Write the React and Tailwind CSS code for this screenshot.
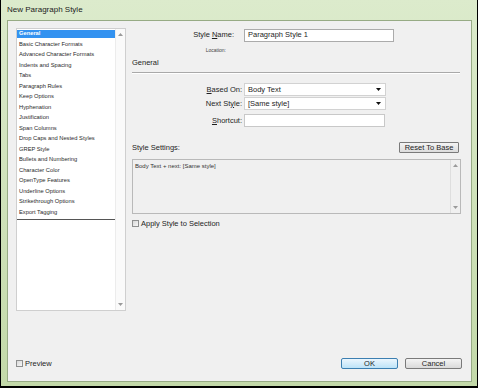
import React from 'react';

const items = [
  'General',
  'Basic Character Formats',
  'Advanced Character Formats',
  'Indents and Spacing',
  'Tabs',
  'Paragraph Rules',
  'Keep Options',
  'Hyphenation',
  'Justification',
  'Span Columns',
  'Drop Caps and Nested Styles',
  'GREP Style',
  'Bullets and Numbering',
  'Character Color',
  'OpenType Features',
  'Underline Options',
  'Strikethrough Options',
  'Export Tagging',
];

const ScrollArrow = ({ up }) => (
  <svg width="5" height="3" viewBox="0 0 5 3">
    <path d={up ? 'M0 3h5L2.5 0z' : 'M0 0h5L2.5 3z'} fill="#9a9a9a" />
  </svg>
);

const Checkbox = ({ label }) => (
  <div className="flex items-center gap-[2px]">
    <div className="w-[7px] h-[7px] border border-[#8e8f8f] bg-linear-to-br from-[#d8d8d8] to-[#f7f7f7]" />
    <span className="text-[7.5px] leading-none text-[#1e1e1e]">{label}</span>
  </div>
);

const Select = ({ value }) => (
  <div className="w-[142px] h-[13px] bg-white border border-[#d2d2d2] flex items-center justify-between pl-[3px] pr-[4px]">
    <span className="text-[7.5px] leading-none text-[#1e1e1e]">{value}</span>
    <svg width="5" height="3" viewBox="0 0 5 3">
      <path d="M0 0h5L2.5 3z" fill="#111" />
    </svg>
  </div>
);

const Label = ({ children, pad = 'pr-[2px]' }) => (
  <div className={`w-[112px] text-right ${pad} text-[7.5px] leading-none text-[#1e1e1e]`}>{children}</div>
);

export default function App() {
  return (
    <div className="w-[478px] h-[388px] bg-black overflow-hidden font-['Liberation_Sans',Arial,sans-serif]">
      {/* window frame */}
      <div className="ml-[1px] w-[476px] h-[386px] bg-linear-to-b from-[#dcebcc] to-[#c3d9a9] flex flex-col">
        {/* title bar */}
        <div className="h-[20px] flex items-center pl-[6px] text-[8px] text-[#1b1b1b]">New Paragraph Style</div>

        {/* client area */}
        <div className="ml-[6px] w-[465px] h-[362px] border border-[#97ab85] bg-[#f0f0f0] flex flex-col">
          <div className="flex-1 flex pt-[7px]">
            {/* category list */}
            <div className="ml-[8px] w-[110px] h-[283px] bg-white border border-[#cfcfcf] flex">
              <div className="w-[99px] flex flex-col">
                {items.map((item, i) => (
                  <div key={item} className="h-[10.5px] flex items-center">
                    {i === 0 ? (
                      <div className="w-full h-[8px] bg-[#3392f0] flex items-center pl-[2px] text-[5.75px] leading-none font-bold text-white">
                        {item}
                      </div>
                    ) : (
                      <span className="pl-[2px] text-[5.75px] leading-none text-[#2a2a2a]">{item}</span>
                    )}
                  </div>
                ))}
                <div className="mt-px h-px bg-[#555]" />
              </div>
              <div className="w-[10px] border-l border-[#ececec] bg-[#fafafa] flex flex-col items-center justify-between py-[4px]">
                <ScrollArrow up />
                <ScrollArrow />
              </div>
            </div>

            {/* settings panel */}
            <div className="ml-[6px] w-[329px] flex flex-col">
              <div className="mt-[0.5px] h-[13px] flex items-center">
                <Label pad="pr-[10px]">
                  Style <span className="underline">N</span>ame:
                </Label>
                <div className="w-[150px] h-[13px] bg-white border border-[#ababab] flex items-center pl-[3px] text-[7.5px] leading-none text-[#1e1e1e]">
                  Paragraph Style 1
                </div>
              </div>

              <div className="mt-[4px] h-[9px] flex items-center">
                <div className="w-[94px] text-right text-[5px] leading-none text-[#444]">Location:</div>
              </div>

              <div className="mt-[3px] h-[10px] flex items-center text-[7.5px] leading-none text-[#1e1e1e]">General</div>

              <div className="mt-[4px] w-[328px] h-px bg-[#a9a9a9]" />
              <div className="w-[328px] h-px bg-white" />

              <div className="mt-[9.8px] flex items-center">
                <Label>
                  <span className="underline">B</span>ased On:
                </Label>
                <Select value="Body Text" />
              </div>
              <div className="mt-[0.5px] flex items-center">
                <Label>
                  Next St<span className="underline">y</span>le:
                </Label>
                <Select value="[Same style]" />
              </div>
              <div className="mt-[4px] flex items-center">
                <Label>
                  <span className="underline">S</span>hortcut:
                </Label>
                <div className="w-[141px] h-[13px] bg-white border border-[#c8c8c8]" />
              </div>

              <div className="mt-[15px] h-[11px] flex items-center justify-between">
                <span className="text-[7.5px] leading-none text-[#1e1e1e]">Style Settings:</span>
                <button className="mr-[2px] w-[60px] h-[11px] border border-[#7a7a7a] rounded-[1px] bg-linear-to-b from-[#f4f4f4] to-[#dcdcdc] text-[7.5px] leading-none text-[#1e1e1e] flex items-center justify-center">
                  Reset To Base
                </button>
              </div>

              <div className="mt-[6px] w-[329px] h-[55.5px] bg-[#f0f0f0] border border-[#b9b9b9] flex">
                <div className="flex-1 pl-[2px] pt-[3px] text-[6px] leading-none text-[#333]">
                  Body Text + next: [Same style]
                </div>
                <div className="w-[10px] border-l border-[#dedede] flex flex-col items-center justify-between py-[4px]">
                  <ScrollArrow up />
                  <ScrollArrow />
                </div>
              </div>

              <div className="mt-[5.5px] h-[7px] flex items-center">
                <Checkbox label="Apply Style to Selection" />
              </div>
            </div>
          </div>

          {/* footer */}
          <div className="h-[11px] mb-[12px] flex items-center">
            <div className="ml-[8px]">
              <Checkbox label="Preview" />
            </div>
            <div className="ml-auto mr-[9px] flex gap-[7px]">
              <button className="w-[57px] h-[11px] border border-[#3c7fb1] rounded-[2px] bg-linear-to-b from-[#ecf6fd] to-[#bde3f8] text-[7.5px] leading-none text-[#1e1e1e] flex items-center justify-center">
                OK
              </button>
              <button className="w-[57px] h-[11px] border border-[#7a7a7a] rounded-[2px] bg-linear-to-b from-[#f4f4f4] to-[#dadada] text-[7.5px] leading-none text-[#1e1e1e] flex items-center justify-center">
                Cancel
              </button>
            </div>
          </div>
        </div>
      </div>
    </div>
  );
}
